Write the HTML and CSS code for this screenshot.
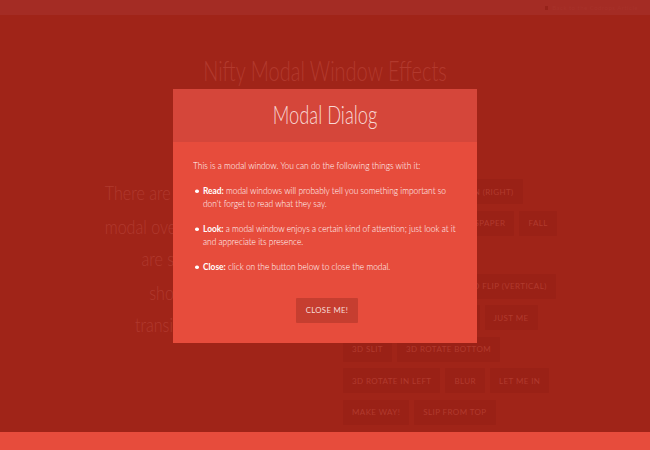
FILE: index.html
```html
<!DOCTYPE html>
<html lang="en">
<head>
<meta charset="utf-8">
<title>Nifty Modal Window Effects</title>
<link rel="stylesheet" href="styles.css">
</head>
<body>
<div class="page">
  <div class="topbar"><span class="topbar-mark"></span><span class="topbar-links">Back to the Codrops Article</span></div>
  <header class="header"><h1 class="title">Nifty Modal Window Effects</h1></header>
  <div class="main">
    <div class="col-text">
      <p class="intro">There are many possibilities for<br>modal overlays to appear. Here<br>are some modern ways of<br>showing them using CSS<br>transitions and animations.</p>
    </div>
    <div class="col-buttons">
      <button class="trigger">Fade in &amp; Scale</button>
      <button class="trigger">Slide in (right)</button>
      <button class="trigger">Slide in (bottom)</button>
      <button class="trigger">Newspaper</button>
      <button class="trigger">Fall</button>
      <button class="trigger">Side Fall</button>
      <button class="trigger">Sticky Up</button>
      <button class="trigger">3D Flip (horizontal)</button>
      <button class="trigger">3D Flip (vertical)</button>
      <button class="trigger">3D Sign</button>
      <button class="trigger">Super Scaled</button>
      <button class="trigger">Just Me</button>
      <button class="trigger">3D Slit</button>
      <button class="trigger">3D Rotate Bottom</button>
      <button class="trigger">3D Rotate In Left</button>
      <button class="trigger">Blur</button>
      <button class="trigger">Let me in</button>
      <button class="trigger">Make way!</button>
      <button class="trigger">Slip from top</button>
    </div>
  </div>
</div>
<div class="strip"></div>

<div class="modal">
  <h3 class="modal-title"><span class="modal-title-text">Modal Dialog</span></h3>
  <div class="modal-body">
    <p class="modal-text">This is a modal window. You can do the following things with it:</p>
    <ul class="modal-list">
      <li><strong>Read:</strong> modal windows will probably tell you something important so don't forget to read what they say.</li>
      <li><strong>Look:</strong> a modal window enjoys a certain kind of attention; just look at it and appreciate its presence.</li>
      <li><strong>Close:</strong> click on the button below to close the modal.</li>
    </ul>
    <button class="close-btn">Close me!</button>
  </div>
</div>
</body>
</html>
```

FILE: styles.css
```css
html, body {
  margin: 0;
  padding: 0;
}
body {
  background: #e74c3c;
  font-family: Lato, "Open Sans", sans-serif;
  width: 650px;
  height: 450px;
  overflow: hidden;
  position: relative;
}
.page {
  height: 432px;
  overflow: hidden;
  background: #a02418;
}
.topbar {
  height: 15px;
  background: #a42c24;
  display: flex;
  justify-content: flex-end;
  align-items: center;
  gap: 4px;
  padding-right: 12px;
}
.topbar-mark {
  width: 3px;
  height: 4px;
  background: #962219;
}
.topbar-links {
  font-size: 6px;
  color: #a8322a;
  letter-spacing: 0.5px;
}
.header {
  padding-top: 39px;
  text-align: center;
}
.title {
  margin: 0;
  font-weight: 300;
  font-size: 20px;
  line-height: 32px;
  color: #b2392d;
  transform: scaleY(1.36);
}
.main {
  margin-top: 90px;
  display: grid;
  grid-template-columns: 343px 222px;
}
.col-text {
  padding-right: 23px;
}
.intro {
  margin: 0;
  text-align: right;
  font-weight: 300;
  font-size: 16.1px;
  line-height: 27.5px;
  color: #b0392e;
  transform: scaleY(1.2);
  transform-origin: top;
}
.col-buttons {
  display: flex;
  flex-wrap: wrap;
  align-content: flex-start;
  column-gap: 5px;
  row-gap: 6.5px;
  padding-top: 3px;
}
.trigger {
  border: none;
  margin: 0;
  height: 25px;
  padding: 0 9px;
  background: #9a2116;
  color: #b13a2e;
  font-family: Lato, sans-serif;
  font-size: 8px;
  letter-spacing: 0.4px;
  text-transform: uppercase;
  border-radius: 1px;
}
.strip {
  height: 18px;
}

.modal {
  position: absolute;
  left: 173px;
  top: 89px;
  width: 304px;
  background: #e74c3c;
  color: #fff;
}
.modal-title {
  margin: 0;
  height: 53px;
  box-sizing: border-box;
  padding: 10px 0;
  background: #d5463a;
  text-align: center;
  font-weight: 300;
  font-size: 18.3px;
  line-height: 33px;
  color: #f8d8d4;
}
.modal-title-text {
  display: inline-block;
  transform: scaleY(1.36);
}
.modal-body {
  padding: 18px 16px 20px 20px;
  font-weight: 300;
  font-size: 8.4px;
  line-height: 11.3px;
}
.modal-text {
  margin: 0 0 14.2px;
  transform: scaleY(1.15);
  transform-origin: top;
}
.modal-list {
  list-style: none;
  margin: 0 0 35px;
  padding: 0;
  transform: scaleY(1.15);
  transform-origin: top;
}
.modal-list li {
  position: relative;
  padding-left: 10px;
  margin-bottom: 10.4px;
}
.modal-list li:last-child {
  margin-bottom: 0;
}
.modal-list li::before {
  content: "";
  position: absolute;
  left: 2px;
  top: 4px;
  width: 3.5px;
  height: 3px;
  border-radius: 50%;
  background: #fff;
}
.modal-list strong {
  font-weight: 700;
}
.close-btn {
  display: block;
  margin: 0 auto;
  height: 25px;
  width: 62px;
  padding: 0;
  border: none;
  background: #c63e30;
  color: #f6dcd7;
  font-family: Lato, sans-serif;
  font-size: 7.8px;
  letter-spacing: 0.3px;
  text-transform: uppercase;
  border-radius: 1px;
}
```
